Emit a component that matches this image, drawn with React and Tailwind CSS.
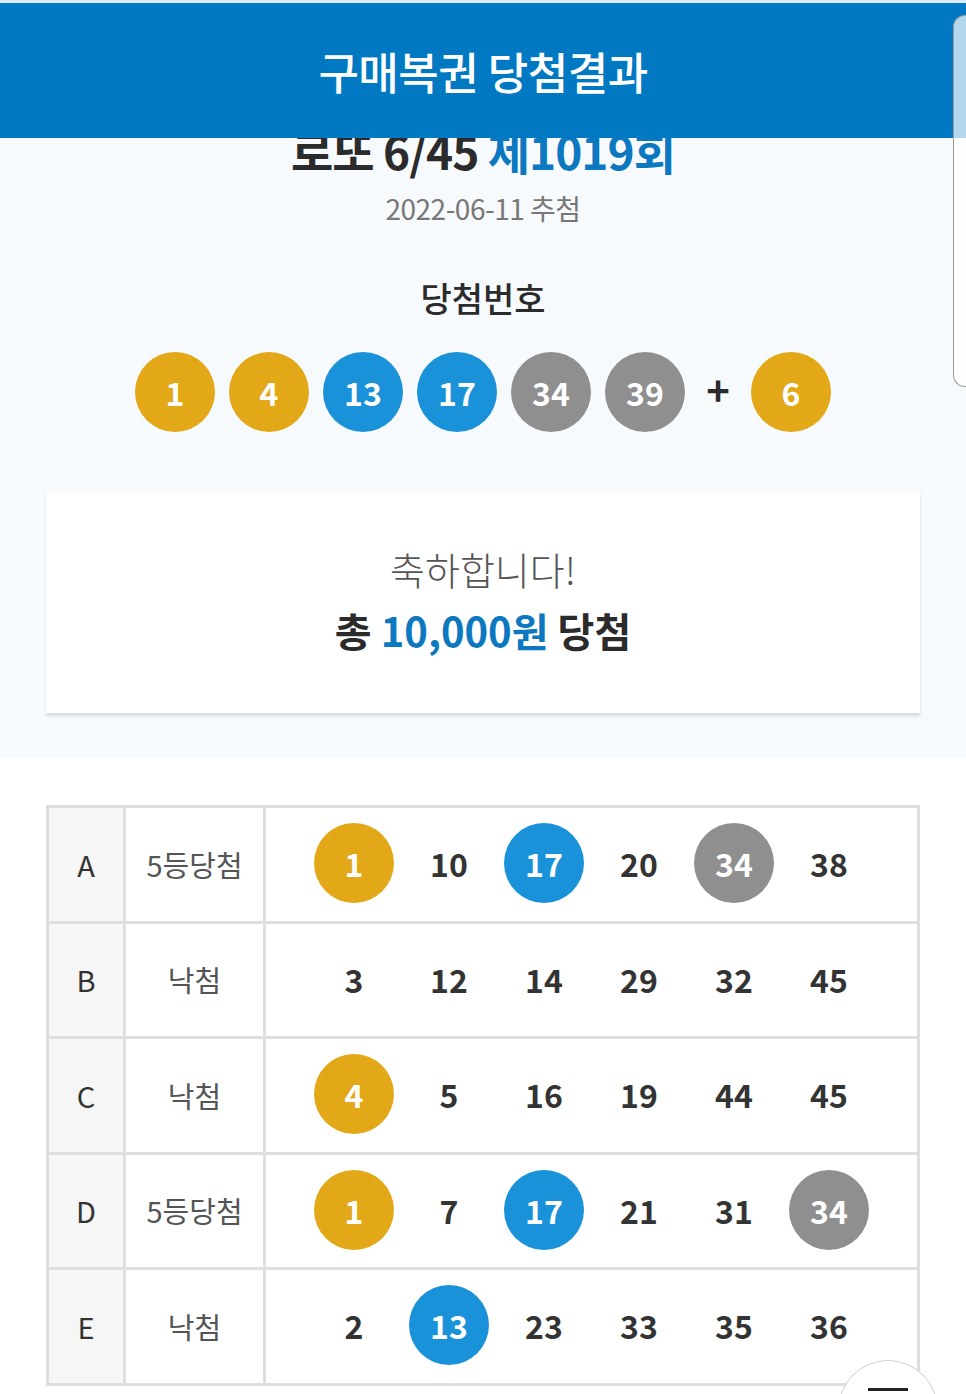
import React from 'react'

const COLORS = {
  y: 'bg-[#e3a817]',
  b: 'bg-[#1a92d9]',
  g: 'bg-[#8f8f8f]',
}

const winning = [
  { n: 1, c: 'y' },
  { n: 4, c: 'y' },
  { n: 13, c: 'b' },
  { n: 17, c: 'b' },
  { n: 34, c: 'g' },
  { n: 39, c: 'g' },
]

const rows = [
  { id: 'A', result: '5등당첨', nums: [[1, 'y'], [10], [17, 'b'], [20], [34, 'g'], [38]] },
  { id: 'B', result: '낙첨', nums: [[3], [12], [14], [29], [32], [45]] },
  { id: 'C', result: '낙첨', nums: [[4, 'y'], [5], [16], [19], [44], [45]] },
  { id: 'D', result: '5등당첨', nums: [[1, 'y'], [7], [17, 'b'], [21], [31], [34, 'g']] },
  { id: 'E', result: '낙첨', nums: [[2], [13, 'b'], [23], [33], [35], [36]] },
]

const Ball = ({ n, c }) => (
  <div className={`w-[80px] h-[80px] rounded-full flex items-center justify-center text-white text-[32px] font-bold ${COLORS[c]}`}>
    {n}
  </div>
)

export default function App() {
  return (
    <div
      className="relative w-[966px] h-[1394px] overflow-hidden bg-white text-[#333]"
      style={{ fontFamily: '"Noto Sans CJK KR", "Noto Sans", sans-serif' }}
    >
      {/* summary */}
      <section className="bg-[#f7fafd] pt-[123px] pb-[45px] flex flex-col items-center">
        <h1 className="text-[46px] leading-[54px] font-bold tracking-[-1px] text-[#2b2b2b]">
          로또 6/45 <span className="text-[#0b78c0]">제1019회</span>
        </h1>
        <p className="mt-[12px] text-[28px] leading-[38px] text-[#777] tracking-[-0.5px]">2022-06-11 추첨</p>

        <h2 className="mt-[49px] text-[34px] leading-[44px] font-medium text-[#2b2b2b]">당첨번호</h2>
        <div className="mt-[32px] flex items-center gap-[14px]">
          {winning.map((b) => (
            <Ball key={b.n} n={b.n} c={b.c} />
          ))}
          <span className="w-[38px] text-center text-[40px] leading-none font-bold text-[#2b2b2b] -mt-[6px]">+</span>
          <Ball n={6} c="y" />
        </div>

        <div className="mt-[59px] w-[874px] bg-white shadow-[0_3px_3px_rgba(0,0,0,0.13)] pt-[54px] pb-[56px] flex flex-col items-center">
          <p className="text-[38px] leading-[48px] font-light text-[#555]">축하합니다!</p>
          <p className="mt-[10px] text-[40px] leading-[54px] font-bold text-[#2b2b2b]">
            총 <span className="text-[#0b78c0]">10,000원</span> 당첨
          </p>
        </div>
      </section>

      {/* ticket rows */}
      <div className="mt-[47px] mx-[46px]">
        <table className="w-[874px] border-collapse border-[3px] border-[#dedede]">
          <tbody>
            {rows.map((r) => (
              <tr key={r.id} className="h-[115.5px]">
                <td className="w-[77px] border-[3px] border-[#dedede] bg-[#f6f6f6] text-center text-[29px] text-[#333]">{r.id}</td>
                <td className="w-[140px] border-[3px] border-[#dedede] text-center text-[29px] text-[#555]">{r.result}</td>
                <td className="border-[3px] border-[#dedede]">
                  <div className="flex justify-center -mt-[2px]">
                    {r.nums.map(([n, c], i) => (
                      <div key={i} className="w-[95px] flex justify-center">
                        {c ? (
                          <Ball n={n} c={c} />
                        ) : (
                          <span className="h-[80px] flex items-center text-[32px] font-bold text-[#333]">{n}</span>
                        )}
                      </div>
                    ))}
                  </div>
                </td>
              </tr>
            ))}
          </tbody>
        </table>
      </div>

      {/* fixed header */}
      <div className="absolute left-0 right-0 top-0 h-[3px] bg-[#dde9f3]" />
      <header className="absolute left-0 right-0 top-[3px] h-[135px] bg-[#0079c2] flex items-center justify-center">
        <span className="text-white text-[44px] font-medium tracking-[-0.5px]">구매복권 당첨결과</span>
      </header>

      {/* scrollbar thumb */}
      <div className="absolute right-0 top-[15px] w-[13px] h-[372px] rounded-l-[12px] border border-r-0 border-[#9a9a9a] bg-white/70" />

      {/* top button */}
      <button className="absolute right-[28px] top-[1360px] w-[100px] h-[100px] rounded-full bg-white border border-[#cfcfcf] flex justify-center">
        <span className="mt-[27px] w-[40px] h-[3px] bg-[#222]" />
      </button>
    </div>
  )
}
